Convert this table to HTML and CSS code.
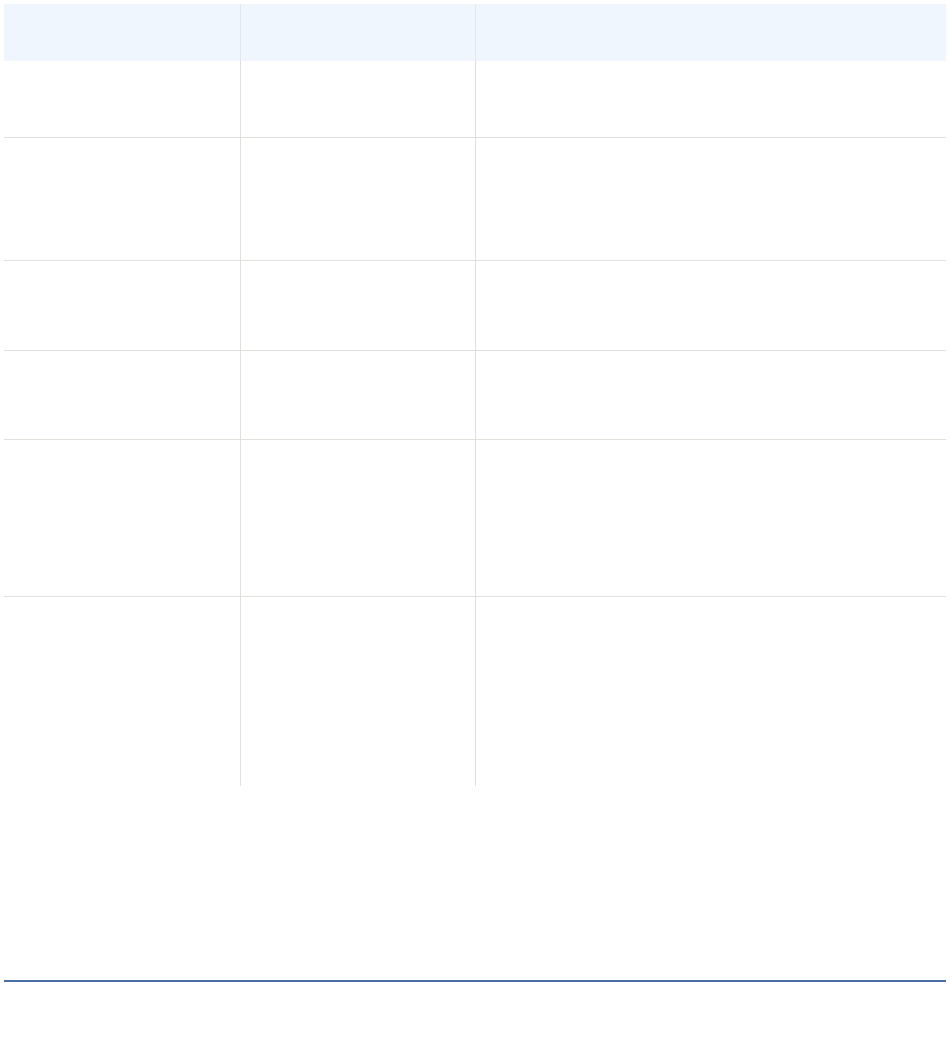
FILE: index.html
```
<!DOCTYPE html>
<html lang="en">
<head>
    <meta charset="UTF-8">
    <meta name="viewport" content="width=device-width, initial-scale=1.0">
    <title>Table</title>
    <link rel="stylesheet" href="styles.css">
</head>
<body>

    <table class="data-table">
        <thead>
            <tr class="head-row">
                <th class="col-a"></th>
                <th class="col-b"></th>
                <th class="col-c"></th>
            </tr>
        </thead>
        <tbody>
            <tr class="row-1"><td></td><td></td><td></td></tr>
            <tr class="row-2"><td></td><td></td><td></td></tr>
            <tr class="row-3"><td></td><td></td><td></td></tr>
            <tr class="row-4"><td></td><td></td><td></td></tr>
            <tr class="row-5"><td></td><td></td><td></td></tr>
            <tr class="row-6"><td></td><td></td><td></td></tr>
        </tbody>
    </table>

    <div class="page-rule"></div>

</body>
</html>
```
FILE: styles.css
```
/* General */
body {
    font-family: 'Open Sans', 'Liberation Sans', sans-serif;
    background-color: #fff;
    margin: 4px;
    color: #333;
}

/* --- Tabla --- */
.data-table {
    width: 942px;
    border-collapse: collapse;
    table-layout: fixed;
}

.data-table th,
.data-table td {
    padding: 0;
    border-right: 1px solid #e2dfda;
    border-bottom: 1px solid #e2dfda;
}

.data-table th:last-child,
.data-table td:last-child {
    border-right: none;
}

.data-table tbody tr:last-child td {
    border-bottom: none;
}

.data-table th {
    background-color: #f0f6fe;
    border-bottom: none;
    border-right-color: #e4e6ea;
}

.col-a { width: 236px; }
.col-b { width: 234px; }

.head-row { height: 57px; }
.row-1 { height: 76px; }
.row-2 { height: 123px; }
.row-3 { height: 90px; }
.row-4 { height: 89px; }
.row-5 { height: 157px; }
.row-6 { height: 190px; }

/* --- Línea inferior --- */
.page-rule {
    width: 944px;
    margin-top: 194px;
    border-top: 2px solid #4a6da7;
}
```
